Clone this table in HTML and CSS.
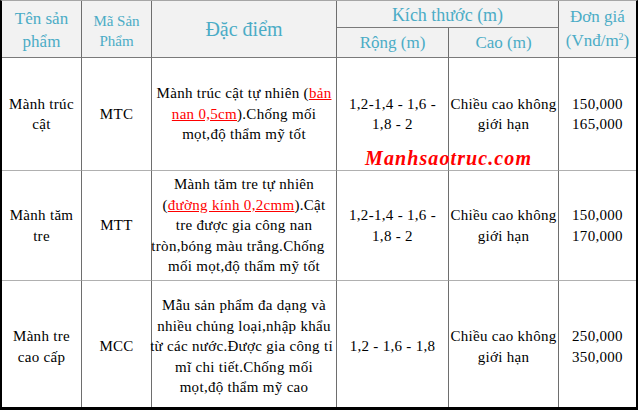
FILE: index.html
```html
<!DOCTYPE html>
<html lang="vi">
<head>
<meta charset="utf-8">
<title>Bảng giá mành trúc</title>
<link rel="stylesheet" href="styles.css">
</head>
<body>
<div class="sheet">
  <table class="price-table">
    <colgroup>
      <col class="c-name">
      <col class="c-code">
      <col class="c-desc">
      <col class="c-width">
      <col class="c-height">
      <col class="c-price">
    </colgroup>
    <thead>
      <tr class="head-1">
        <th rowspan="2" class="h-name">Tên sản<br>phẩm</th>
        <th rowspan="2" class="h-code">Mã Sản<br>Phẩm</th>
        <th rowspan="2" class="h-desc">Đặc điểm</th>
        <th colspan="2" class="h-size">Kích thước (m)</th>
        <th rowspan="2" class="h-price last">Đơn giá<br>(Vnđ/m<sup>2</sup>)</th>
      </tr>
      <tr class="head-2">
        <th class="h-sub">Rộng (m)</th>
        <th class="h-sub">Cao (m)</th>
      </tr>
    </thead>
    <tbody>
      <tr class="row-1">
        <td>Mành trúc<br>cật</td>
        <td>MTC</td>
        <td class="desc"><div class="lines">
          <span>Mành trúc cật tự nhiên (<em class="mark">bản</em></span>
          <span><em class="mark">nan 0,5cm</em>).Chống mối</span>
          <span>mọt,độ thẩm mỹ tốt</span>
        </div></td>
        <td>1,2-1,4 - 1,6 -<br>1,8 - 2</td>
        <td>Chiều cao không<br>giới hạn</td>
        <td class="last">150,000<br>165,000</td>
      </tr>
      <tr class="row-2">
        <td>Mành tăm<br>tre</td>
        <td>MTT</td>
        <td class="desc"><div class="lines">
          <span>Mành tăm tre tự nhiên</span>
          <span>(<em class="mark">đường kính 0,2cmm</em>).Cật</span>
          <span>tre được gia công nan</span>
          <span class="wide">tròn,bóng màu trắng.Chống</span>
          <span>mối mọt,độ thẩm mỹ tốt</span>
        </div></td>
        <td>1,2-1,4 - 1,6 -<br>1,8 - 2</td>
        <td>Chiều cao không<br>giới hạn</td>
        <td class="last">150,000<br>170,000</td>
      </tr>
      <tr class="row-3">
        <td>Mành tre<br>cao cấp</td>
        <td>MCC</td>
        <td class="desc"><div class="lines">
          <span>Mẫu sản phẩm đa dạng và</span>
          <span>nhiều chủng loại,nhập khẩu</span>
          <span class="wider">từ các nước.Được gia công tỉ</span>
          <span>mĩ chi tiết.Chống mối</span>
          <span>mọt,độ thẩm mỹ cao</span>
        </div></td>
        <td>1,2 - 1,6 - 1,8</td>
        <td>Chiều cao không<br>giới hạn</td>
        <td class="last">250,000<br>350,000</td>
      </tr>
    </tbody>
  </table>
  <div class="watermark">Manhsaotruc.com</div>
</div>
</body>
</html>
```

FILE: styles.css
```css
html, body {
  margin: 0;
  padding: 0;
  background: #ffffff;
}

.sheet {
  position: relative;
  width: 640px;
  height: 410px;
  overflow: hidden;
  font-family: "Liberation Serif", "Times New Roman", serif;
}

.price-table {
  table-layout: fixed;
  width: 638px;
  border-collapse: separate;
  border-spacing: 0;
  border-top: 1px solid #a6a6a6;
  border-left: 2px solid #000;
  border-right: 2px solid #000;
  border-bottom: 3px solid #000;
  font-family: "Liberation Serif", "Times New Roman", serif;
  color: #000;
}

.c-name { width: 80px; }
.c-code { width: 70px; }
.c-desc { width: 185px; }
.c-width { width: 112px; }
.c-height { width: 110px; }
.c-price { width: 77px; }

th, td {
  padding: 0;
  text-align: center;
  vertical-align: middle;
  border-right: 1px solid #6e6e6e;
  border-bottom: 1px solid #7a7a7a;
  overflow: visible;
  white-space: nowrap;
  font-family: "Liberation Serif", "Times New Roman", serif;
}

th.last, td.last { border-right: none; }

thead th {
  background: #f2f2f2;
  color: #4bacc6;
  font-weight: normal;
}

.head-1 { height: 27px; }
.head-2 { height: 30px; }

.h-name {
  font-size: 17px;
  line-height: 23px;
  padding-top: 2px;
}

.h-code {
  font-size: 15px;
  line-height: 20px;
  padding-top: 3px;
}

.h-desc {
  font-size: 20px;
  line-height: 23px;
}

.h-size {
  font-size: 18px;
  line-height: 21px;
  padding-top: 3px;
}

.h-sub {
  font-size: 17px;
  line-height: 20px;
}

.h-price {
  font-size: 17px;
  line-height: 24px;
}

.h-price sup {
  font-size: 10px;
  line-height: 0;
  vertical-align: 6px;
}

tbody td {
  font-size: 15px;
  line-height: 20.5px;
  letter-spacing: 0.3px;
  border-bottom-color: #b0b0b0;
}

.row-1 { height: 113px; }
.row-2 { height: 110px; }
.row-3 { height: 126px; }

.row-3 td {
  border-bottom: none;
  padding-top: 5px;
}

.lines {
  display: flex;
  flex-direction: column;
  align-items: center;
}

.lines span {
  white-space: nowrap;
}

.lines .wide {
  margin-right: 12px;
}

.lines .wider {
  margin-right: 5px;
}

.mark {
  font-style: normal;
  color: #ff0000;
  text-decoration: underline;
  text-decoration-color: #ff0000;
}

.watermark {
  position: absolute;
  left: 365px;
  top: 147px;
  font-family: "Liberation Serif", "Times New Roman", serif;
  font-weight: bold;
  font-style: italic;
  font-size: 20px;
  letter-spacing: 1.1px;
  color: #ff0000;
}
```
